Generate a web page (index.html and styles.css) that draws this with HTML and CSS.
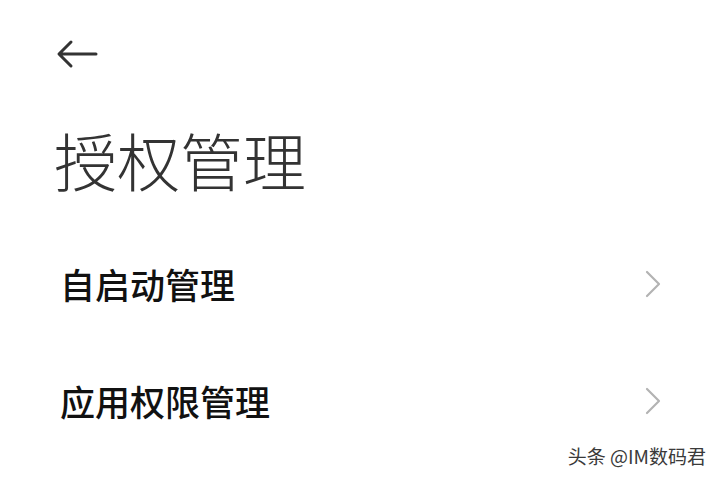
FILE: index.html
```html
<!DOCTYPE html>
<html lang="zh-CN">
<head>
<meta charset="utf-8">
<title>授权管理</title>
<link rel="stylesheet" href="styles.css">
</head>
<body>
<div class="page">
  <div class="topbar">
    <svg class="back" width="44" height="30" viewBox="0 0 44 30">
      <path d="M40 15 H4 M15 3 L3 15 L15 27" fill="none" stroke="#333" stroke-width="3" stroke-linecap="round" stroke-linejoin="round"/>
    </svg>
  </div>
  <h1 class="title">授权管理</h1>
  <div class="list">
    <div class="row">
      <span class="label">自启动管理</span>
      <svg class="chev" width="18" height="30" viewBox="0 0 18 30">
        <path d="M3 3 L15 15 L3 27" fill="none" stroke="#b3b3b3" stroke-width="2.2" stroke-linecap="round" stroke-linejoin="round"/>
      </svg>
    </div>
    <div class="row">
      <span class="label">应用权限管理</span>
      <svg class="chev" width="18" height="30" viewBox="0 0 18 30">
        <path d="M3 3 L15 15 L3 27" fill="none" stroke="#b3b3b3" stroke-width="2.2" stroke-linecap="round" stroke-linejoin="round"/>
      </svg>
    </div>
  </div>
  <div class="watermark">头条 @IM数码君</div>
</div>
</body>
</html>
```
FILE: styles.css
```css
html, body {
  margin: 0;
  padding: 0;
  background: #ffffff;
}
.page {
  width: 720px;
  height: 480px;
  position: relative;
  overflow: hidden;
  font-family: "Noto Sans CJK SC", "Noto Sans", sans-serif;
}
.topbar {
  display: flex;
  align-items: center;
  padding: 39px 0 0 56px;
  height: 30px;
}
.back {
  display: block;
}
.title {
  margin: 50px 0 0 54px;
  font-size: 63px;
  font-weight: 300;
  color: #333333;
  line-height: 80px;
  letter-spacing: 0;
}
.list {
  margin-top: 65px;
  display: flex;
  flex-direction: column;
  gap: 77px;
}
.row {
  display: flex;
  align-items: center;
  justify-content: space-between;
  padding: 0 58px 0 60px;
  height: 40px;
}
.label {
  font-size: 35px;
  font-weight: 500;
  color: #111111;
  line-height: 40px;
}
.chev {
  display: block;
}
.watermark {
  position: absolute;
  right: 14px;
  bottom: 11px;
  font-size: 19px;
  color: #3a3a3a;
  text-shadow: 1px 1px 0 #ffffff, -1px -1px 0 #ffffff, 0 0 2px #ffffff;
  font-family: "Noto Sans CJK SC", sans-serif;
}
```
